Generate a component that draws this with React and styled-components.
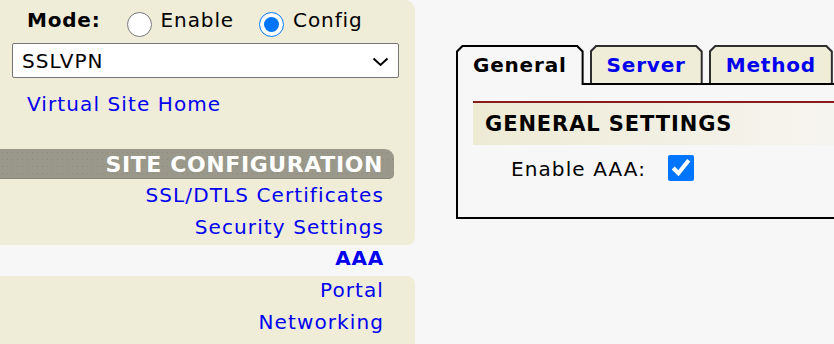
import { useState } from 'react'
import styled, { createGlobalStyle } from 'styled-components'

const GlobalStyle = createGlobalStyle`
  html, body {
    margin: 0;
    padding: 0;
    background: #f7f7f8;
    overflow: hidden;
  }
  body {
    font-family: "DejaVu Sans", Verdana, sans-serif;
    font-size: 20px;
    letter-spacing: 1.1px;
    color: #000;
  }
`

const beige = '#efecd8'
const linkBlue = '#0000ee'

const Page = styled.div`
  display: flex;
  width: 834px;
  height: 344px;
  overflow: hidden;
`

const Sidebar = styled.div`
  width: 415px;
  flex: none;
  display: flex;
  flex-direction: column;
`

const Section = styled.div`
  background: ${beige};
  display: flex;
  flex-direction: column;
  border-radius: ${p => p.$radius};
  padding-bottom: ${p => p.$padBottom || 0}px;
  flex: ${p => (p.$grow ? 1 : 'none')};
`

const ModeRow = styled.div`
  display: flex;
  align-items: flex-start;
  height: 43px;
  padding-left: 27px;
`

const ModeLabel = styled.span`
  font-weight: bold;
  letter-spacing: 0.8px;
  line-height: 40px;
  margin-right: 26px;
`

const Radio = styled.input.attrs({ type: 'radio', name: 'mode' })`
  width: 25px;
  height: 25px;
  margin: 12px 9px 0 0;
`

const RadioText = styled.span`
  line-height: 40px;
  margin-right: 25px;
  letter-spacing: 0.9px;
`

const SelectWrap = styled.div`
  position: relative;
  margin: 0 16px 0 12px;
`

const Select = styled.select`
  appearance: none;
  width: 100%;
  height: 35px;
  box-sizing: border-box;
  border: 1px solid #767676;
  border-radius: 2px;
  background: #fff;
  padding: 0 0 0 9px;
  font: inherit;
  letter-spacing: inherit;
  color: #000;
`

const Chevron = styled.svg`
  position: absolute;
  right: 10px;
  top: 14px;
  pointer-events: none;
`

const HomeLink = styled.a`
  display: block;
  margin-top: 10px;
  padding-left: 27px;
  line-height: 32px;
  color: ${linkBlue};
  text-decoration: none;
`

const GroupHeader = styled.div`
  margin-top: 29px;
  width: 394px;
  box-sizing: border-box;
  padding: 3px 11px 0 0;
  line-height: 26px;
  text-align: right;
  font-size: 22px;
  font-weight: bold;
  letter-spacing: 0.6px;
  color: #fff;
  background-color: #99988a;
  background-image: radial-gradient(circle, rgba(110, 108, 98, 0.35) 0.6px, transparent 1px);
  background-size: 5px 7px;
  border-bottom: 1px solid #86857a;
  border-radius: 0 9px 5px 0;
`

const NavList = styled.div`
  display: flex;
  flex-direction: column;
  margin-top: ${p => p.$shift || 0}px;
`

const NavItem = styled.a`
  display: block;
  padding-right: 31px;
  text-align: right;
  line-height: ${p => p.$lh || 32}px;
  color: ${linkBlue};
  text-decoration: none;
  font-weight: ${p => (p.$active ? 'bold' : 'normal')};
  letter-spacing: ${p => (p.$active ? '0.8px' : '1.1px')};
`

const ActiveRow = styled.div`
  height: 31px;
  padding-bottom: 4px;
  box-sizing: border-box;
`

const Main = styled.div`
  flex: 1;
  padding: 45px 0 0 41px;
  overflow: hidden;
`

const TabRow = styled.div`
  display: flex;
  align-items: flex-start;
  gap: 6px;
  height: 40px;
  margin-bottom: -2px;
`

const chamfer = 'polygon(6px 0, calc(100% - 6px) 0, 100% 6px, 100% 100%, 0 100%, 0 6px)'

const TabShape = styled.div`
  position: relative;
  z-index: ${p => (p.$active ? 1 : 0)};
  height: ${p => (p.$active ? 40 : 38)}px;
  box-sizing: border-box;
  padding: 2px 2px 0;
  background: ${p => (p.$active ? '#000' : '#2e2e2e')};
  clip-path: ${chamfer};
`

const TabFace = styled.div`
  height: 100%;
  box-sizing: border-box;
  padding: 1px 15px 0;
  line-height: 34px;
  font-weight: bold;
  letter-spacing: 0.8px;
  color: ${p => (p.$active ? '#000' : linkBlue)};
  background: ${p => (p.$active ? '#f7f7f8' : beige)};
  clip-path: polygon(5px 0, calc(100% - 5px) 0, 100% 5px, 100% 100%, 0 100%, 0 5px);
  cursor: pointer;
`

const Box = styled.div`
  width: 600px;
  border: 2px solid #000;
  border-right: none;
  padding: 16px 0 32px 0;
`

const SectionHead = styled.div`
  margin-left: 15px;
  border-top: 2px solid #8b1c1c;
  padding-left: 12px;
  line-height: 42px;
  font-size: 21px;
  font-weight: bold;
  letter-spacing: 0.9px;
  background: linear-gradient(to right, #edead4 0%, #f2f0e4 35%, #f6f4ee 60%, #f8f4f1 100%);
`

const FieldRow = styled.label`
  display: flex;
  align-items: center;
  height: 32px;
  margin-top: 8px;
  padding-left: 53px;
`

const Check = styled.input.attrs({ type: 'checkbox' })`
  width: 26px;
  height: 26px;
  margin: -3px 0 0 22px;
`

const tabs = ['General', 'Server', 'Method']

export default function App() {
  const [mode, setMode] = useState('config')
  const [tab, setTab] = useState('General')
  const [enabled, setEnabled] = useState(true)

  return (
    <Page>
      <GlobalStyle />
      <Sidebar>
        <Section $radius="0 10px 8px 0" $padBottom={2}>
          <ModeRow>
            <ModeLabel>Mode:</ModeLabel>
            <Radio checked={mode === 'enable'} onChange={() => setMode('enable')} />
            <RadioText>Enable</RadioText>
            <Radio checked={mode === 'config'} onChange={() => setMode('config')} />
            <RadioText>Config</RadioText>
          </ModeRow>
          <SelectWrap>
            <Select defaultValue="SSLVPN">
              <option>SSLVPN</option>
            </Select>
            <Chevron width="17" height="10" viewBox="0 0 17 10">
              <path d="M1.5 1.5 L8.5 8 L15.5 1.5" fill="none" stroke="#000" strokeWidth="2" />
            </Chevron>
          </SelectWrap>
          <HomeLink href="#">Virtual Site Home</HomeLink>
          <GroupHeader>SITE CONFIGURATION</GroupHeader>
          <NavList>
            <NavItem href="#">SSL/DTLS Certificates</NavItem>
            <NavItem href="#">Security Settings</NavItem>
          </NavList>
        </Section>
        <ActiveRow>
          <NavItem href="#" $active $lh={27}>AAA</NavItem>
        </ActiveRow>
        <Section $radius="0 8px 0 0" $grow>
          <NavList $shift={-2}>
            <NavItem href="#">Portal</NavItem>
            <NavItem href="#">Networking</NavItem>
          </NavList>
        </Section>
      </Sidebar>
      <Main>
        <TabRow>
          {tabs.map(t => (
            <TabShape key={t} $active={t === tab} onClick={() => setTab(t)}>
              <TabFace $active={t === tab}>{t}</TabFace>
            </TabShape>
          ))}
        </TabRow>
        <Box>
          <SectionHead>GENERAL SETTINGS</SectionHead>
          <FieldRow>
            Enable AAA:
            <Check checked={enabled} onChange={e => setEnabled(e.target.checked)} />
          </FieldRow>
        </Box>
      </Main>
    </Page>
  )
}
